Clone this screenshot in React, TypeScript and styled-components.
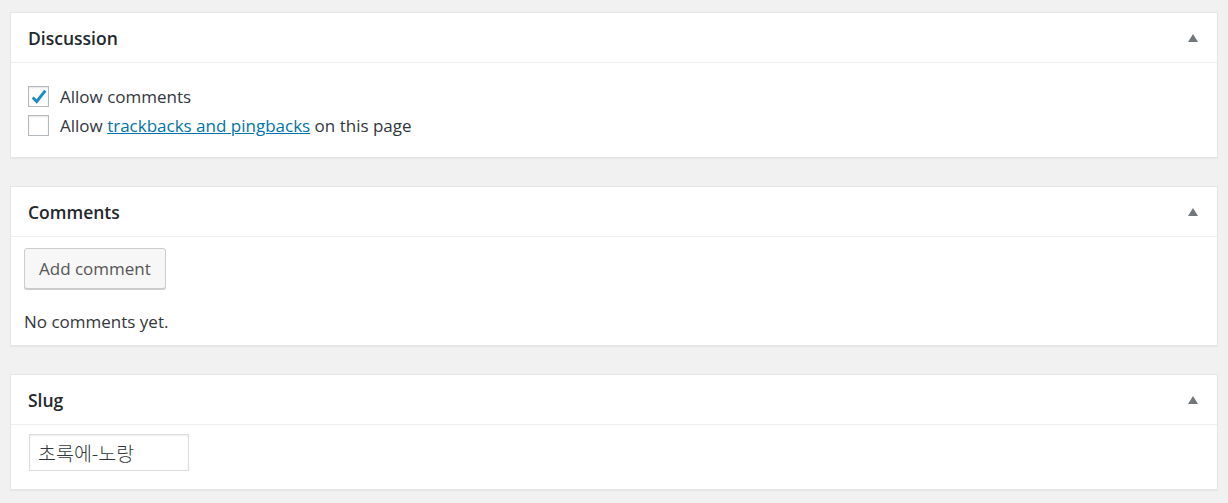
import React from "react";
import styled, { createGlobalStyle } from "styled-components";

const Global = createGlobalStyle`
  html, body { margin: 0; padding: 0; background: #f1f1f1; }
  body { font-family: "Open Sans", "Noto Sans", "Noto Sans CJK KR", sans-serif; color: #444; }
`;

const Page = styled.div`
  display: flex;
  flex-direction: column;
  gap: 28px;
  padding: 12px 10px 14px 10px;
`;

const Panel = styled.section`
  background: #fff;
  border: 1px solid #e5e5e5;
  box-shadow: 0 1px 1px rgba(0, 0, 0, 0.04);
`;

const Header = styled.div`
  height: 49px;
  display: flex;
  align-items: center;
  justify-content: space-between;
  padding: 0 19px 0 17px;
  border-bottom: 1px solid #eee;
`;

const Title = styled.h2`
  margin: 0;
  padding-top: 1px;
  font-size: 17.5px;
  font-weight: 600;
  color: #23282d;
`;

const Arrow = styled.span`
  width: 0;
  height: 0;
  border-left: 5.5px solid transparent;
  border-right: 5.5px solid transparent;
  border-bottom: 8px solid #72777c;
`;

const Body = styled.div<{ $pad: string }>`
  padding: ${(p) => p.$pad};
  font-size: 17px;
  color: #32373c;
`;

const CheckRow = styled.label`
  display: flex;
  align-items: center;
  gap: 11px;
  height: 29px;
`;

const Box = styled.span`
  width: 19px;
  height: 19px;
  border: 1px solid #b4b9be;
  background: #fff;
  box-shadow: inset 0 1px 2px rgba(0, 0, 0, 0.1);
  display: flex;
  align-items: center;
  justify-content: center;
`;

const Link = styled.a`
  color: #0073aa;
  text-decoration: underline;
`;

const Button = styled.button`
  height: 41px;
  padding: 0 14px;
  font-family: inherit;
  font-size: 17px;
  color: #555;
  background: #f7f7f7;
  border: 1px solid #ccc;
  border-radius: 3px;
  box-shadow: 0 1px 0 #ccc;
  cursor: pointer;
`;

const Note = styled.p`
  margin: 0;
  margin-top: 22px;
  line-height: 22px;
`;

const Input = styled.div`
  width: 150px;
  height: 35px;
  border: 1px solid #ddd;
  box-shadow: inset 0 1px 2px rgba(0, 0, 0, 0.07);
  padding-left: 8px;
  display: flex;
  align-items: center;
  font-family: "Noto Sans CJK KR", "Open Sans", sans-serif;
  font-weight: 300;
  font-size: 19.5px;
  color: #32373c;
`;

const Check = () => (
  <svg width="18" height="18" viewBox="0 0 20 20">
    <path d="M3 10.5 L7.5 15 L17 3" fill="none" stroke="#1e8cbe" strokeWidth="3.2" />
  </svg>
);

const PanelHead = ({ title }: { title: string }) => (
  <Header>
    <Title>{title}</Title>
    <Arrow />
  </Header>
);

export default function App() {
  return (
    <>
      <Global />
      <Page>
        <Panel>
          <PanelHead title="Discussion" />
          <Body $pad="19px 17px 17px 17px">
            <CheckRow>
              <Box>
                <Check />
              </Box>
              Allow comments
            </CheckRow>
            <CheckRow>
              <Box />
              <span>
                Allow <Link href="#">trackbacks and pingbacks</Link> on this page
              </span>
            </CheckRow>
          </Body>
        </Panel>
        <Panel>
          <PanelHead title="Comments" />
          <Body $pad="11px 13px 12px 13px">
            <Button>Add comment</Button>
            <Note>No comments yet.</Note>
          </Body>
        </Panel>
        <Panel>
          <PanelHead title="Slug" />
          <Body $pad="9px 18px 18px 18px">
            <Input>초록에-노랑</Input>
          </Body>
        </Panel>
      </Page>
    </>
  );
}
